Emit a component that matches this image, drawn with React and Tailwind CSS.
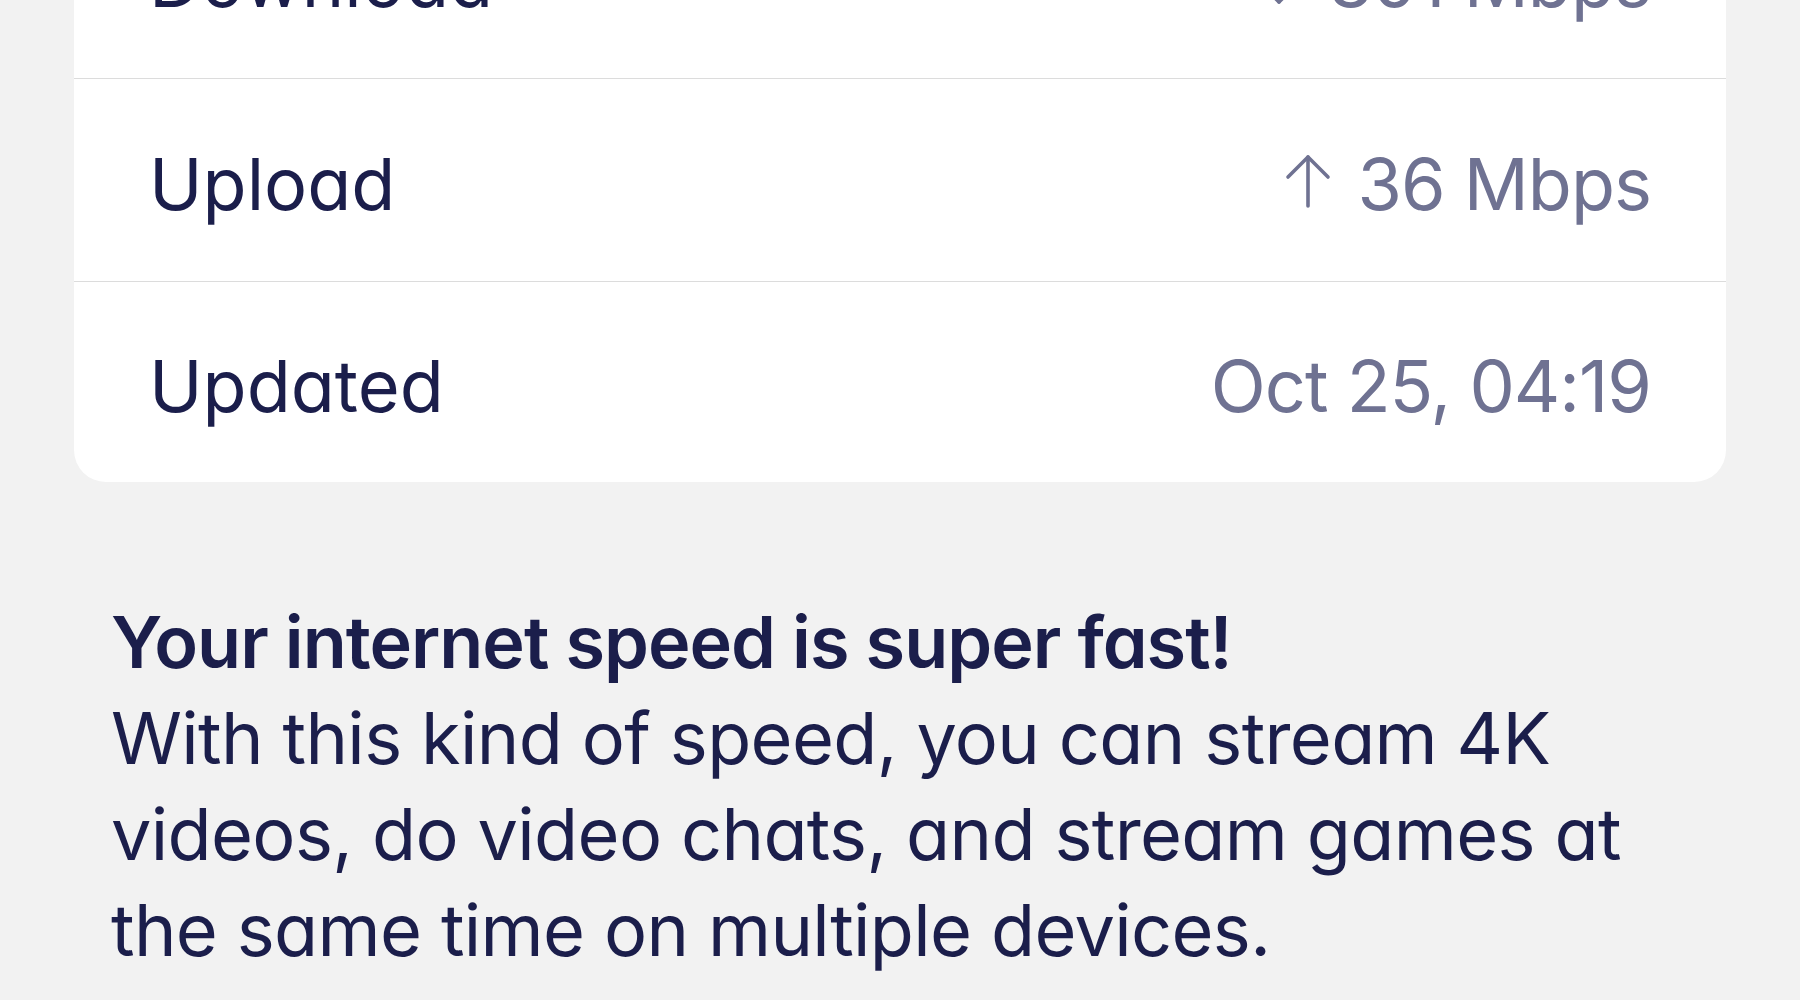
import React from 'react'

const rows = [
    { label: 'Download', value: '301 Mbps', arrow: 'down' },
    { label: 'Upload', value: '36 Mbps', arrow: 'up' },
    { label: 'Updated', value: 'Oct 25, 04:19' },
]

function Arrow({ dir }) {
    return (
        <svg width="46" height="54" viewBox="0 0 46 54" fill="none" stroke="currentColor" strokeWidth="3.6" strokeLinecap="round" strokeLinejoin="round" className="mr-[26px] mt-[-6px]">
            {dir === 'up' ? (
                <>
                    <path d="M23 3 V52" />
                    <path d="M3 23 L23 3 L43 23" />
                </>
            ) : (
                <>
                    <path d="M23 2 V51" />
                    <path d="M3 31 L23 51 L43 31" />
                </>
            )}
        </svg>
    )
}

export default function App() {
    return (
        <div className="min-h-screen h-[1000px] overflow-hidden bg-[#f2f2f2] font-['Inter',sans-serif] [font-feature-settings:'cv11'] text-[72px] leading-[96px]">
            {/* speed details card */}
            <div className="mx-[74px] mt-[-124px] bg-white rounded-b-[32px] divide-y divide-[#dcdcdc]">
                {rows.map((row, i) => (
                    <div
                        key={row.label}
                        className={`flex items-center justify-between px-[75px] pt-2 ${i === rows.length - 1 ? 'h-[200px]' : 'h-[203px]'}`}
                    >
                        <span className="text-[#1b1e4b]">{row.label}</span>
                        <span className="flex items-center text-[#6f7292] tracking-[-0.014em]">
                            {row.arrow && <Arrow dir={row.arrow} />}
                            {row.value}
                        </span>
                    </div>
                ))}
            </div>

            {/* speed summary */}
            <div className="mt-[112px] pl-[111px] w-[1740px] text-[#1b1e4b]">
                <p className="font-semibold tracking-[-0.014em]">Your internet speed is super fast!</p>
                <p className="tracking-[-0.009em]">
                    With this kind of speed, you can stream 4K videos, do video chats, and stream games at the same time on multiple devices.
                </p>
            </div>
        </div>
    )
}
